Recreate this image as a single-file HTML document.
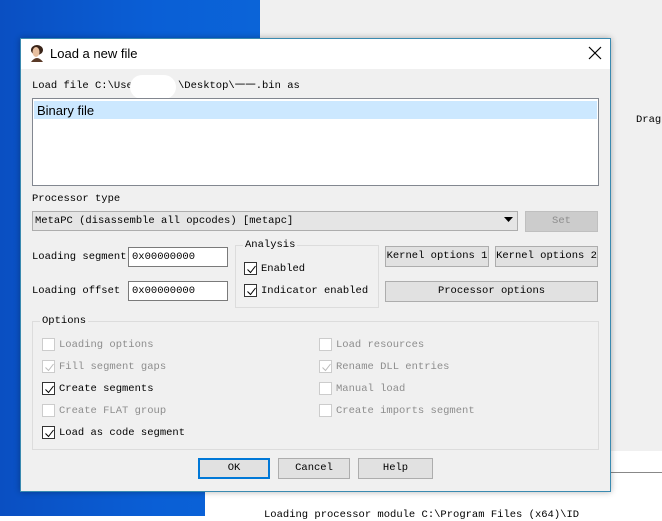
<!DOCTYPE html><html><head><style>
*{margin:0;padding:0;box-sizing:border-box}
body{width:662px;height:516px;overflow:hidden;position:relative;background:#fff;font-family:"Liberation Mono",monospace;font-size:10.5px;color:#000}
.a{position:absolute}
.t{position:absolute;white-space:nowrap;line-height:12px}
.btn{position:absolute;background:#e1e1e1;border:1px solid #adadad;text-align:center;line-height:19px;white-space:nowrap}
.inp{position:absolute;background:#fff;border:1px solid #7a7a7a;padding-left:3px;line-height:18px;font-size:10.5px}
.cb{position:absolute;width:13px;height:13px;border:1px solid #333;background:#fff}
.cb.d{border-color:#ccc}
.cb svg{position:absolute;left:1px;top:1px}
.g{color:#8d8d8d}
</style></head><body>
<div class="a" style="left:0;top:0;width:260px;height:516px;background:linear-gradient(90deg,#0a4fc2,#0a5fd6 60%,#0b64d8)"></div>
<div class="a" style="left:205px;top:492px;width:60px;height:24px;background:#fff"></div>
<div class="a" style="left:260px;top:0;width:402px;height:451px;background:#f0f0f0"></div>
<div class="a" style="left:205px;top:472px;width:457px;height:1px;background:#888"></div>
<div class="t" style="left:636px;top:114px">Drag</div>
<div class="t" style="left:264px;top:509px">Loading processor module C:\Program Files (x64)\ID</div>

<div class="a" style="left:20px;top:38px;width:591px;height:454px;background:#f0f0f0;border:1px solid #3a8ab0;box-shadow:0 0 6px rgba(0,0,0,.3)">
 <div class="a" style="left:0;top:0;width:589px;height:30px;background:#fff"></div>
</div>
<svg class="a" style="left:28px;top:44px" width="18" height="18"><ellipse cx="9" cy="6" rx="6" ry="5" fill="#3a2418"/><ellipse cx="8" cy="8" rx="3.5" ry="5" fill="#e8c0a0"/><path d="M3 18 Q9 10 15 18Z" fill="#5a3a28"/></svg>
<div class="t" style="left:50px;top:46px;font-family:'Liberation Sans',sans-serif;font-size:13px;line-height:15px">Load a new file</div>
<svg class="a" style="left:588px;top:46px" width="14" height="14"><path d="M1 1L13 13M13 1L1 13" stroke="#000" stroke-width="1.2"/></svg>

<div class="t" style="left:32px;top:80px">Load file C:\Use</div>
<div class="t" style="left:178px;top:80px">\Desktop\一一.bin as</div>
<div class="a" style="left:130px;top:75px;width:46px;height:24px;background:#fff;border-radius:12px"></div>
<div class="a" style="left:32px;top:98px;width:567px;height:88px;background:#fff;border:1px solid #828790"></div>
<div class="a" style="left:34px;top:101px;width:563px;height:18px;background:#cce8ff"></div>
<div class="t" style="left:37px;top:103px;font-family:'Liberation Sans',sans-serif;font-size:13px;line-height:15px">Binary file</div>

<div class="t" style="left:32px;top:193px">Processor type</div>
<div class="a" style="left:32px;top:211px;width:486px;height:20px;background:#e5e5e5;border:1px solid #adadad"></div>
<div class="t" style="left:35px;top:215px">MetaPC (disassemble all opcodes) [metapc]</div>
<svg class="a" style="left:504px;top:217px" width="9" height="6"><path d="M0 0H9L4.5 5Z" fill="#000"/></svg>
<div class="btn g" style="left:525px;top:211px;width:73px;height:21px;background:#cccccc;border-color:#bfbfbf">Set</div>

<div class="t" style="left:32px;top:251px">Loading segment</div>
<div class="inp" style="left:128px;top:247px;width:100px;height:20px">0x00000000</div>
<div class="t" style="left:32px;top:285px">Loading offset</div>
<div class="inp" style="left:128px;top:281px;width:100px;height:20px">0x00000000</div>

<div class="a" style="left:235px;top:245px;width:144px;height:63px;border:1px solid #dcdcdc"></div>
<div class="t" style="left:243px;top:239px;background:#f0f0f0;padding:0 2px">Analysis</div>
<div class="cb" style="left:244px;top:262px"><svg width="11" height="11"><path d="M1.5 5.5L4.5 8.5L9.5 2" stroke="#000" fill="none"/></svg></div>
<div class="t" style="left:261px;top:263px">Enabled</div>
<div class="cb" style="left:244px;top:284px"><svg width="11" height="11"><path d="M1.5 5.5L4.5 8.5L9.5 2" stroke="#000" fill="none"/></svg></div>
<div class="t" style="left:261px;top:285px">Indicator enabled</div>

<div class="btn" style="left:385px;top:246px;width:104px;height:21px">Kernel options 1</div>
<div class="btn" style="left:495px;top:246px;width:103px;height:21px">Kernel options 2</div>
<div class="btn" style="left:385px;top:281px;width:213px;height:21px">Processor options</div>

<div class="a" style="left:32px;top:321px;width:567px;height:129px;border:1px solid #dcdcdc"></div>
<div class="t" style="left:40px;top:315px;background:#f0f0f0;padding:0 2px">Options</div>

<div class="cb d" style="left:42px;top:338px"></div><div class="t g" style="left:59px;top:339px">Loading options</div>
<div class="cb d" style="left:42px;top:360px"><svg width="11" height="11"><path d="M1.5 5.5L4.5 8.5L9.5 2" stroke="#bbb" fill="none"/></svg></div><div class="t g" style="left:59px;top:361px">Fill segment gaps</div>
<div class="cb" style="left:42px;top:382px"><svg width="11" height="11"><path d="M1.5 5.5L4.5 8.5L9.5 2" stroke="#000" fill="none"/></svg></div><div class="t" style="left:59px;top:383px">Create segments</div>
<div class="cb d" style="left:42px;top:404px"></div><div class="t g" style="left:59px;top:405px">Create FLAT group</div>
<div class="cb" style="left:42px;top:426px"><svg width="11" height="11"><path d="M1.5 5.5L4.5 8.5L9.5 2" stroke="#000" fill="none"/></svg></div><div class="t" style="left:59px;top:427px">Load as code segment</div>

<div class="cb d" style="left:319px;top:338px"></div><div class="t g" style="left:336px;top:339px">Load resources</div>
<div class="cb d" style="left:319px;top:360px"><svg width="11" height="11"><path d="M1.5 5.5L4.5 8.5L9.5 2" stroke="#bbb" fill="none"/></svg></div><div class="t g" style="left:336px;top:361px">Rename DLL entries</div>
<div class="cb d" style="left:319px;top:382px"></div><div class="t g" style="left:336px;top:383px">Manual load</div>
<div class="cb d" style="left:319px;top:404px"></div><div class="t g" style="left:336px;top:405px">Create imports segment</div>

<div class="btn" style="left:198px;top:458px;width:72px;height:21px;border:2px solid #0078d7;line-height:17px">OK</div>
<div class="btn" style="left:278px;top:458px;width:72px;height:21px">Cancel</div>
<div class="btn" style="left:358px;top:458px;width:75px;height:21px">Help</div>
</body></html>
